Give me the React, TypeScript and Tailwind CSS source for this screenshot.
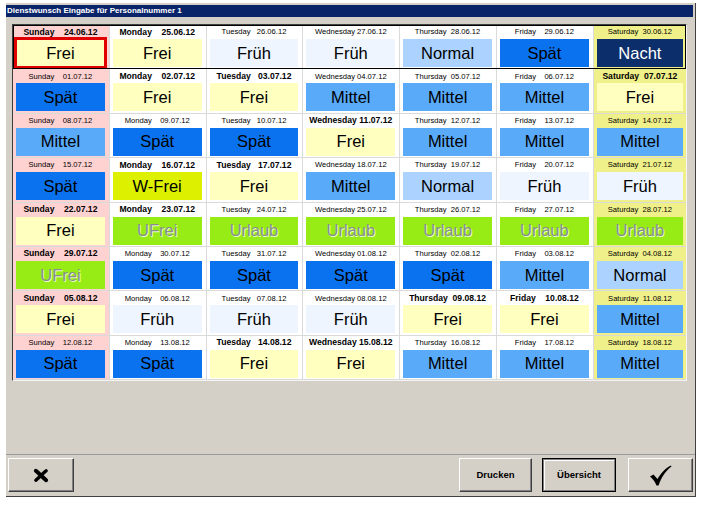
import React from "react";

type Shift = "Frei" | "Früh" | "Normal" | "Spät" | "Nacht" | "Mittel" | "W-Frei" | "UFrei" | "Urlaub";

const shiftStyle: Record<Shift, string> = {
  Frei: "bg-[#ffffc0] text-black",
  Früh: "bg-[#eef5ff] text-black",
  Normal: "bg-[#acd3ff] text-black",
  Spät: "bg-[#0a72ee] text-black",
  Nacht: "bg-[#0c2f6c] text-white",
  Mittel: "bg-[#5aaafa] text-black",
  "W-Frei": "bg-[#dcf000] text-black",
  UFrei: "bg-[#96ec14] text-[#8c8c8c] [text-shadow:1px_1px_0_#e8ffd0]",
  Urlaub: "bg-[#96ec14] text-[#8c8c8c] [text-shadow:1px_1px_0_#e8ffd0]",
};

const days = ["Sunday", "Monday", "Tuesday", "Wednesday", "Thursday", "Friday", "Saturday"];

// [date, bold header, shift]
const weeks: [string, boolean, Shift][][] = [
  [["24.06.12", true, "Frei"], ["25.06.12", true, "Frei"], ["26.06.12", false, "Früh"], ["27.06.12", false, "Früh"], ["28.06.12", false, "Normal"], ["29.06.12", false, "Spät"], ["30.06.12", false, "Nacht"]],
  [["01.07.12", false, "Spät"], ["02.07.12", true, "Frei"], ["03.07.12", true, "Frei"], ["04.07.12", false, "Mittel"], ["05.07.12", false, "Mittel"], ["06.07.12", false, "Mittel"], ["07.07.12", true, "Frei"]],
  [["08.07.12", false, "Mittel"], ["09.07.12", false, "Spät"], ["10.07.12", false, "Spät"], ["11.07.12", true, "Frei"], ["12.07.12", false, "Mittel"], ["13.07.12", false, "Mittel"], ["14.07.12", false, "Mittel"]],
  [["15.07.12", false, "Spät"], ["16.07.12", true, "W-Frei"], ["17.07.12", true, "Frei"], ["18.07.12", false, "Mittel"], ["19.07.12", false, "Normal"], ["20.07.12", false, "Früh"], ["21.07.12", false, "Früh"]],
  [["22.07.12", true, "Frei"], ["23.07.12", true, "UFrei"], ["24.07.12", false, "Urlaub"], ["25.07.12", false, "Urlaub"], ["26.07.12", false, "Urlaub"], ["27.07.12", false, "Urlaub"], ["28.07.12", false, "Urlaub"]],
  [["29.07.12", true, "UFrei"], ["30.07.12", false, "Spät"], ["31.07.12", false, "Spät"], ["01.08.12", false, "Spät"], ["02.08.12", false, "Spät"], ["03.08.12", false, "Mittel"], ["04.08.12", false, "Normal"]],
  [["05.08.12", true, "Frei"], ["06.08.12", false, "Früh"], ["07.08.12", false, "Früh"], ["08.08.12", false, "Früh"], ["09.08.12", true, "Frei"], ["10.08.12", true, "Frei"], ["11.08.12", false, "Mittel"]],
  [["12.08.12", false, "Spät"], ["13.08.12", false, "Spät"], ["14.08.12", true, "Frei"], ["15.08.12", true, "Frei"], ["16.08.12", false, "Mittel"], ["17.08.12", false, "Mittel"], ["18.08.12", false, "Mittel"]],
];

const cellBg = ["bg-[#ffd2d2]", "bg-white", "bg-white", "bg-white", "bg-white", "bg-white", "bg-[#f0f08a]"];

function DayCell({ col, date, bold, shift, selected }: { col: number; date: string; bold: boolean; shift: Shift; selected?: boolean }) {
  return (
    <div className={`${cellBg[col]} flex flex-col border-b border-[#dadada] pl-[3px] ${col < 6 ? "border-r pr-[4px]" : "pr-[3px]"}`}>
      <div
        className={`h-[14px] flex items-center justify-center whitespace-pre text-black ${bold ? "text-[8.6px] font-bold" : "text-[7.6px]"}`}
      >
        {days[col].padEnd(10)}
        {date}
      </div>
      <div
        className={`h-[28px] flex items-center justify-center text-[16.5px] ${shiftStyle[shift]} ${selected ? "outline-[3px] outline-solid outline-[#e00000] outline-offset-[-1px]" : ""}`}
      >
        {shift}
      </div>
    </div>
  );
}

function WinButton({ children, isDefault, className = "" }: { children: React.ReactNode; isDefault?: boolean; className?: string }) {
  return (
    <button
      className={`h-[34px] flex items-center justify-center bg-[#d4d0c8] text-black text-[9.5px] font-bold ${
        isDefault
          ? "border border-black shadow-[inset_1px_1px_0_#808080,inset_-1px_-1px_0_#808080,inset_2px_2px_0_#ffffff]"
          : "border border-t-white border-l-white border-r-[#404040] border-b-[#404040] shadow-[inset_-1px_-1px_0_#808080]"
      } ${className}`}
    >
      {children}
    </button>
  );
}

export default function App() {
  return (
    <div className="w-[705px] h-[506px] bg-white overflow-hidden font-['Liberation_Sans',Arial,sans-serif]">
      <div className="ml-[6px] mt-[3px] w-[690px] h-[494px] bg-[#d4d0c8] border-r border-b border-[#404040] flex flex-col">
        <div className="mt-[2px] mr-[2px] h-[12px] bg-[#0a246a] text-white text-[8px] font-bold flex items-center pl-[1px]">
          Dienstwunsch Eingabe für Personalnummer 1
        </div>

        <div className="pl-[6px] pt-[7px]">
          <div className="w-[675px] border-l border-t border-[#404040] border-r border-b border-r-[#f4f4f4] border-b-[#f4f4f4]">
            {weeks.map((week, r) => (
              <div key={r} className="relative h-[44.375px] grid grid-cols-[repeat(6,96.8px)_1fr]">
                {week.map(([date, bold, shift], c) => (
                  <DayCell key={c} col={c} date={date} bold={bold} shift={shift} selected={r === 0 && c === 0} />
                ))}
                {r === 0 && <div className="absolute inset-0 border border-black pointer-events-none" />}
              </div>
            ))}
          </div>
        </div>

        <div className="flex-1" />

        <div className="border-t border-[#9a9a9a] h-[42px] flex items-start pt-[3px] px-[2px]">
          <WinButton className="w-[66px]">
            <svg width="16" height="15" viewBox="0 0 17 16">
              <path d="M3 3 C6 5.5 10 9.5 14 13" stroke="#000" strokeWidth="4.2" strokeLinecap="round" fill="none" />
              <path d="M14 3 C11 5.5 7 9.5 3 13" stroke="#000" strokeWidth="3.6" strokeLinecap="round" fill="none" />
            </svg>
          </WinButton>
          <div className="flex-1" />
          <WinButton className="w-[73px]">Drucken</WinButton>
          <WinButton isDefault className="w-[74px] ml-[10px]">
            Übersicht
          </WinButton>
          <WinButton className="w-[65px] ml-[12px]">
            <svg width="23" height="21" viewBox="0 0 23 21">
              <path d="M1 11.5 L4.5 9.5 L8.5 14 C12 8 16.5 3 22 0.5 L22.5 1.5 C17 5.5 12.5 12 9.5 20.5 L7.5 20.5 C6 16.5 3.5 13.5 1 11.5 Z" fill="#000" />
            </svg>
          </WinButton>
        </div>
      </div>
    </div>
  );
}
